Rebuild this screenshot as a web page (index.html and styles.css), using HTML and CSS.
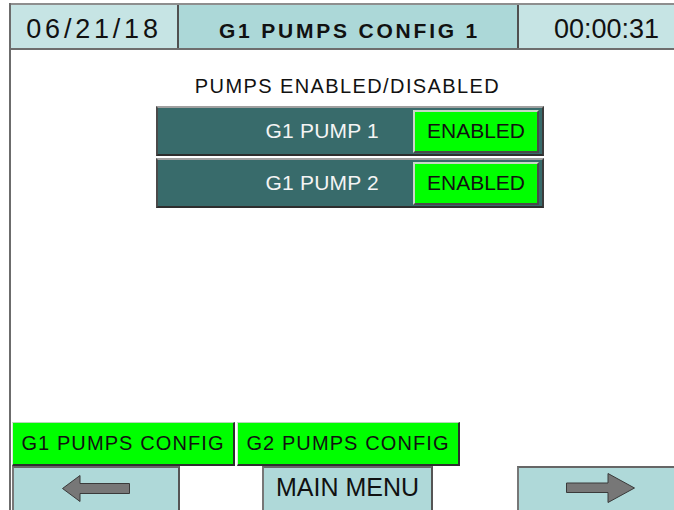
FILE: index.html
```html
<!DOCTYPE html>
<html>
<head>
<meta charset="utf-8">
<link rel="stylesheet" href="styles.css">
</head>
<body>
<div class="screen">
  <div class="header">
    <div class="cell date">06/21/18</div>
    <div class="cell title">G1 PUMPS CONFIG 1</div>
    <div class="cell time">00:00:31</div>
  </div>
  <div class="section-title">PUMPS ENABLED/DISABLED</div>
  <div class="pumps">
    <div class="pump-row">
      <span class="pump-label">G1 PUMP 1</span>
      <span class="state-btn">ENABLED</span>
    </div>
    <div class="pump-row">
      <span class="pump-label">G1 PUMP 2</span>
      <span class="state-btn">ENABLED</span>
    </div>
  </div>
  <div class="config-row">
    <div class="cfg-btn cfg-g1">G1 PUMPS CONFIG</div>
    <div class="cfg-btn cfg-g2">G2 PUMPS CONFIG</div>
  </div>
  <div class="nav-row">
    <div class="nav-btn nav-left">
      <svg width="68" height="28" viewBox="0 0 68 28"><polygon points="0.5,13.5 18,0.5 18,8.5 67.5,8.5 67.5,18.5 18,18.5 18,26.5" fill="#777" stroke="#3a3a3a" stroke-width="1"/></svg>
    </div>
    <div class="nav-btn nav-main">MAIN MENU</div>
    <div class="nav-btn nav-right">
      <svg width="69" height="30" viewBox="0 0 69 30"><polygon points="0.5,10 42,10 42,0.5 68.5,15 42,29.5 42,19.5 0.5,19.5" fill="#777" stroke="#3a3a3a" stroke-width="1"/></svg>
    </div>
  </div>
</div>
</body>
</html>
```
FILE: styles.css
```css
html, body {
  margin: 0;
  padding: 0;
  width: 674px;
  height: 510px;
  overflow: hidden;
  background: #ffffff;
  font-family: "Liberation Sans", Arial, sans-serif;
}
.screen {
  margin: 3px 0 0 9px;
  height: 507px;
  width: 663px;
  border-left: 2px solid #6c6c6c;
  display: flex;
  flex-direction: column;
  overflow: hidden;
}
.header {
  display: flex;
  height: 43px;
  border-top: 2px solid #8e8e8e;
  border-bottom: 2px solid #6e6e6e;
}
.cell {
  display: flex;
  align-items: center;
  justify-content: center;
  color: #111;
  box-sizing: border-box;
}
.date {
  width: 166px;
  background: #c6e4e4;
  font-size: 27px;
  letter-spacing: 3.8px;
  padding-top: 5px;
}
.title {
  width: 340px;
  border-left: 2px solid #505050;
  background: #acd8d8;
  font-size: 21px;
  font-weight: bold;
  letter-spacing: 2.8px;
  padding-top: 8px;
  padding-left: 3px;
}
.time {
  flex: 1;
  border-left: 2px solid #505050;
  background: #c6e4e4;
  font-size: 27px;
  padding-top: 5px;
  padding-left: 20px;
}
.section-title {
  margin-top: 25px;
  width: 663px;
  text-align: center;
  padding-left: 10px;
  box-sizing: border-box;
  font-size: 20px;
  line-height: 22px;
  letter-spacing: 1.4px;
  color: #111;
}
.pumps {
  margin: 9px 0 0 145px;
  width: 388px;
  display: flex;
  flex-direction: column;
  gap: 2px;
}
.pump-row {
  height: 46px;
  display: flex;
  align-items: center;
  justify-content: flex-end;
  background: #386b6b;
  border-top: 2px solid #a0a0a0;
  border-left: 2px solid #4a4a4a;
  border-bottom: 2px solid #2e2e2e;
  border-right: 2px solid #3c3c3c;
}
.pump-label {
  color: #f4f4f4;
  font-size: 21px;
  margin-right: 34px;
  letter-spacing: 0.2px;
}
.state-btn {
  width: 122px;
  height: 39px;
  margin-right: 3px;
  display: flex;
  align-items: center;
  justify-content: center;
  background: #00ff00;
  border-top: 2px solid #c8d8c8;
  border-left: 2px solid #c8d8c8;
  border-bottom: 2px solid #4a4a4a;
  border-right: 2px solid #4a4a4a;
  font-size: 21px;
  color: #111;
}
.config-row {
  margin-top: auto;
  height: 44px;
  display: flex;
  gap: 2px;
  padding-left: 1px;
}
.cfg-btn {
  background: #00ff00;
  display: flex;
  align-items: center;
  justify-content: center;
  font-size: 20px;
  letter-spacing: 1.1px;
  color: #111;
  border-top: 1px solid #b8d8b8;
  border-left: 1px solid #d8e8d8;
  border-right: 2px solid #2e2e2e;
  border-bottom: 2px solid #2e2e2e;
}
.cfg-g1 { width: 220px; }
.cfg-g2 { width: 220px; }
.nav-row {
  height: 44px;
  display: flex;
  padding-left: 1px;
}
.nav-btn {
  background: #afd9d9;
  border-top: 2px solid #666;
  border-left: 2px solid #777;
  border-right: 2px solid #555;
  display: flex;
  align-items: center;
  justify-content: center;
  box-sizing: border-box;
  height: 46px;
}
.nav-left { width: 168px; padding-bottom: 2px; }
.nav-main {
  width: 171px;
  margin-left: 82px;
  font-size: 25px;
  color: #111;
  padding-bottom: 5px;
}
.nav-right {
  flex: 1;
  margin-left: 84px;
  border-right: none;
  padding-bottom: 4px;
  padding-left: 8px;
}
```
